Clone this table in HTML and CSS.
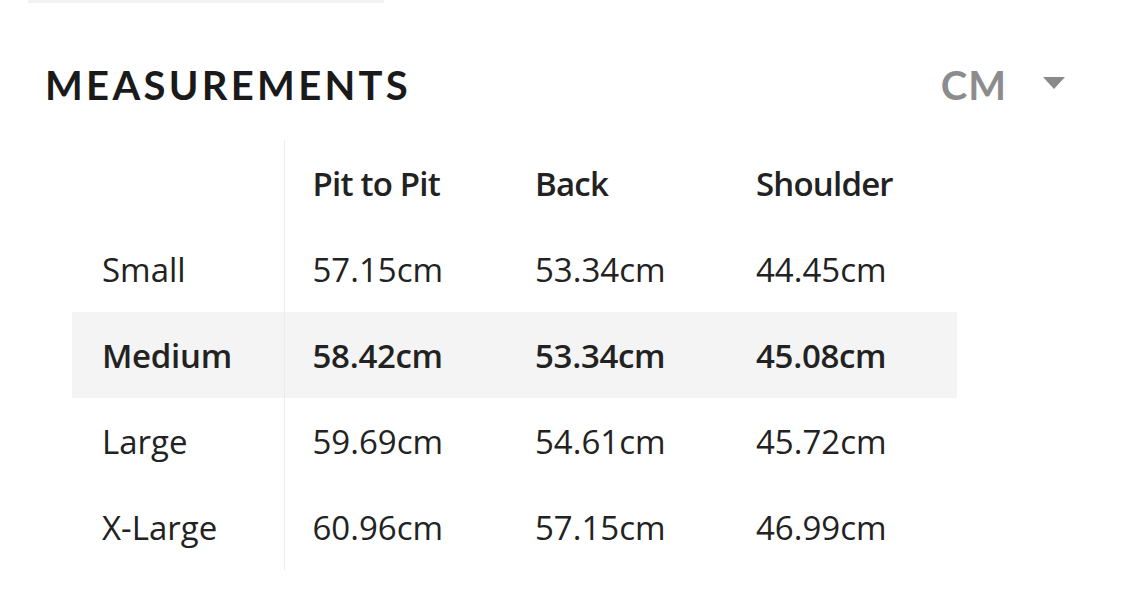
FILE: index.html
```html
<!DOCTYPE html>
<html lang="en">
<head>
<meta charset="utf-8">
<title>Measurements</title>
<link rel="stylesheet" href="styles.css">
</head>
<body>
<div class="top-bar"></div>
<section class="measurements">
  <header class="head">
    <h2 class="title">MEASUREMENTS</h2>
    <button class="unit">
      <span class="unit-label">CM</span>
      <svg class="caret" width="22" height="12" viewBox="0 0 22 12"><path d="M0 0 H22 L11 12 Z" fill="#8a8a8a"/></svg>
    </button>
  </header>
  <table class="size-table">
    <colgroup>
      <col class="c-label"><col class="c1"><col class="c2"><col class="c3">
    </colgroup>
    <thead>
      <tr>
        <th class="label"></th>
        <th class="val">Pit to Pit</th>
        <th class="val">Back</th>
        <th class="val">Shoulder</th>
      </tr>
    </thead>
    <tbody>
      <tr>
        <td class="label">Small</td>
        <td class="val">57.15cm</td>
        <td class="val">53.34cm</td>
        <td class="val">44.45cm</td>
      </tr>
      <tr class="selected">
        <td class="label">Medium</td>
        <td class="val">58.42cm</td>
        <td class="val">53.34cm</td>
        <td class="val">45.08cm</td>
      </tr>
      <tr>
        <td class="label">Large</td>
        <td class="val">59.69cm</td>
        <td class="val">54.61cm</td>
        <td class="val">45.72cm</td>
      </tr>
      <tr>
        <td class="label">X-Large</td>
        <td class="val">60.96cm</td>
        <td class="val">57.15cm</td>
        <td class="val">46.99cm</td>
      </tr>
    </tbody>
  </table>
</section>
</body>
</html>
```
FILE: styles.css
```css
html, body {
  margin: 0;
  padding: 0;
  background: #ffffff;
}
body {
  font-family: "Open Sans", "Liberation Sans", sans-serif;
  color: #222222;
  width: 1125px;
  height: 600px;
  overflow: hidden;
}
.top-bar {
  margin-left: 28px;
  width: 356px;
  height: 3px;
  background: #f2f2f2;
}
.measurements {
  padding: 0 0 0 45px;
}
.head {
  display: flex;
  align-items: center;
  justify-content: space-between;
  padding-top: 58px;
  padding-right: 60px;
  height: 48px;
}
.title {
  margin: 0;
  font-family: Lato, "Liberation Sans", sans-serif;
  font-size: 40px;
  font-weight: 700;
  letter-spacing: 3.3px;
  color: #1a1a1a;
  line-height: 48px;
}
.unit {
  display: flex;
  align-items: center;
  gap: 36px;
  background: none;
  border: 0;
  padding: 0;
  font-family: Lato, "Liberation Sans", sans-serif;
}
.unit-label {
  font-size: 40px;
  font-weight: 700;
  letter-spacing: 1px;
  color: #8c8c8c;
  line-height: 48px;
}
.caret {
  display: block;
  margin-top: -4px;
}
.size-table {
  margin-top: 31px;
  margin-left: 27px;
  border-collapse: collapse;
  table-layout: fixed;
  width: 885px;
  font-size: 33px;
}
.c-label { width: 212px; }
.c1 { width: 223px; }
.c2 { width: 221px; }
.c3 { width: 229px; }
.size-table th,
.size-table td {
  height: 86px;
  padding: 0 0 0 28px;
  text-align: left;
  vertical-align: middle;
  white-space: nowrap;
}
.size-table th {
  font-weight: 600;
  letter-spacing: -0.8px;
}
.size-table td {
  font-weight: 400;
}
.size-table .label {
  padding-left: 30px;
  border-right: 1px solid #ececec;
}
.size-table tr.selected td {
  background: #f4f4f4;
  font-weight: 600;
  letter-spacing: -0.3px;
}
```
